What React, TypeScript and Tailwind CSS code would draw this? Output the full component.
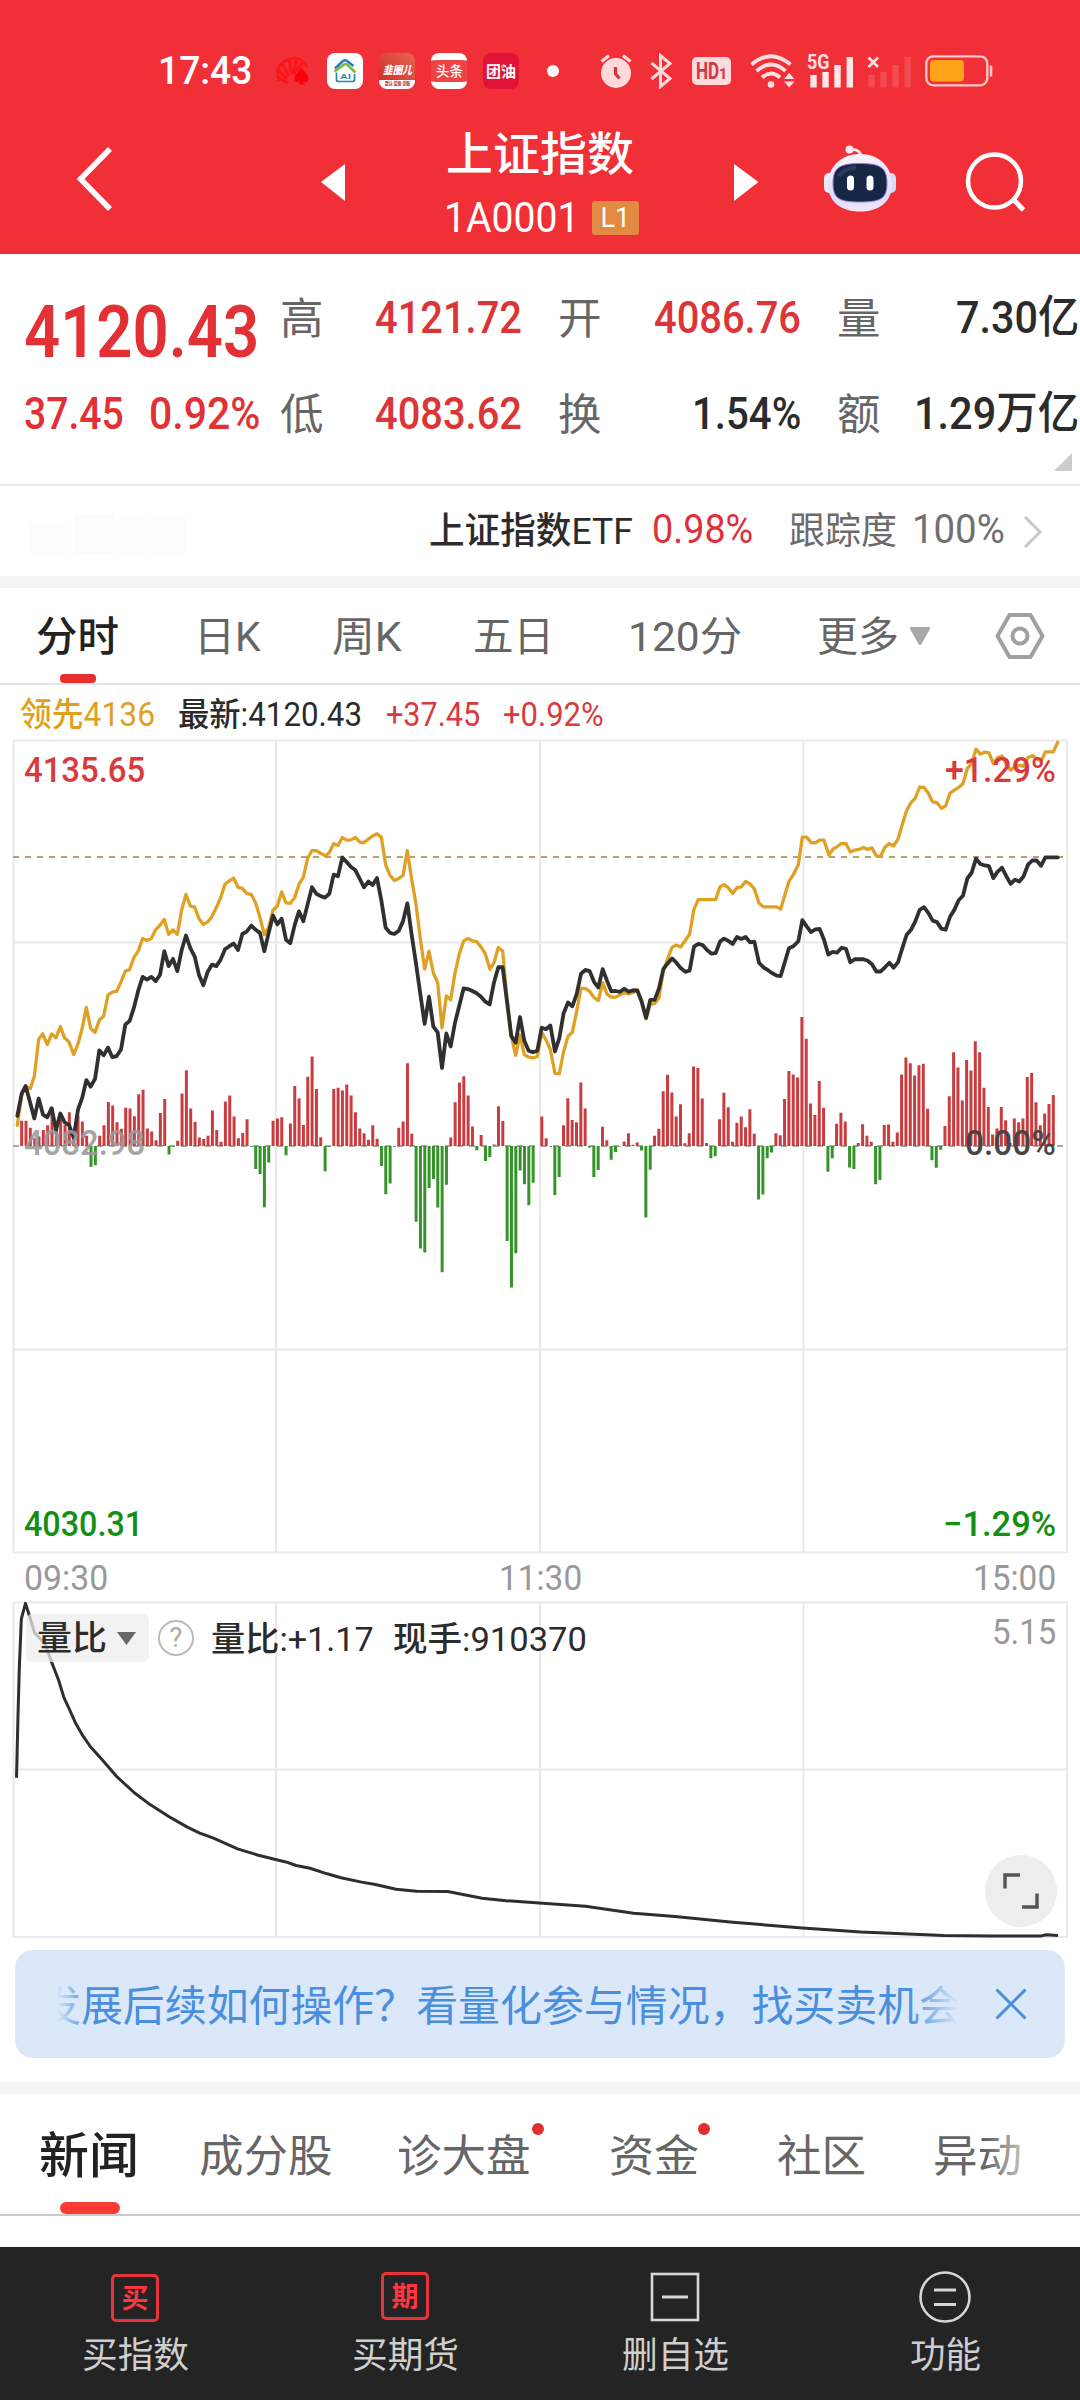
import { useLayoutEffect, useRef, useState, type ReactNode } from "react";

/* Single-line text condensed horizontally to the width of its box. */
function Fit({ className = "", children }: { className?: string; children: ReactNode }) {
  const outer = useRef<HTMLSpanElement>(null);
  const inner = useRef<HTMLSpanElement>(null);
  const [scale, setScale] = useState(1);
  useLayoutEffect(() => {
    if (outer.current && inner.current) {
      setScale(outer.current.clientWidth / inner.current.offsetWidth);
    }
  }, []);
  return (
    <span ref={outer} className={"block shrink-0 whitespace-nowrap " + className}>
      <span ref={inner} className="inline-block origin-left" style={{ transform: `scaleX(${scale})` }}>
        {children}
      </span>
    </span>
  );
}

/* Minute-by-minute momentum bars; positive is up, negative is down. */
const BARS = [
  66, 66, 48, 20, 25, 42, 54, 100, 50, 70, 55, 88, 38, 80, 64, 27, -54, -50, 27, 54, 115, 106, 62, 45, 100, 98, 78, 135,
  147, 46, 38, 15, 86, 123, -22, -2, 14, 137, 198, 98, 63, 22, 18, 27, 93, 42, 11, 116, 132, 77, 20, 34, 70, -2, -60,
  -73, -160, -43, 66, 72, 75, -24, 59, 157, 124, 55, 181, 234, 149, 23, -66, -2, 149, 152, 145, 161, 132, 88, 46, 33, 16,
  54, 19, -52, -126, -98, -2, 48, 64, 216, 32, -198, -268, -278, -110, -86, -161, -330, -101, 22, 114, 166, 182, 132, 51,
  -11, 29, -39, -29, 4, 104, 65, -248, -370, -280, -64, -100, -155, -96, 0, 77, 20, -2, -128, -81, 54, 125, 68, 62, 166,
  98, -4, -81, -63, 50, 15, -36, -16, -1, 12, 33, 3, 9, -12, -187, -62, 27, 45, 143, 186, 140, 77, 109, 7, 33, 208, 204,
  124, 8, -32, -27, 70, 139, 101, 11, 61, 77, 49, 96, 32, -140, -127, -32, -17, 33, 28, 123, 196, 187, 179, 337, 280,
  111, 81, 170, 100, -67, -32, 58, 87, 64, -56, -60, 8, 57, 27, 11, -100, -89, 55, 56, 11, 35, 187, 231, 216, 184, 211,
  215, 97, -37, -57, -10, 52, 130, 245, 205, 119, 225, 197, 274, 245, 152, 102, 30, 46, 102, 67, 8, 72, 62, 72, 180, 191,
  114, 54, 85, 110, 133,
];

const INDEX_LINE =
  "52,1008 65,950 77,930 91,975 103,1015 116,963 129,1005 142,1012 155,988 168,1045 181,1002 194,1025 207,1032 221,1065 234,992 247,960 259,915 272,932 285,912 298,837 311,850 324,830 337,855 350,852 363,835 376,770 389,760 402,725 415,680 428,645 441,652 454,645 467,656 480,640 493,578 506,617 519,598 532,630 545,575 558,537 571,570 584,592 597,640 610,667 623,632 636,613 649,617 662,600 675,573 688,565 701,558 714,575 727,533 740,527 754,511 767,522 780,530 793,578 806,530 819,485 832,508 845,493 858,548 871,557 884,510 897,474 910,500 923,455 936,411 949,428 962,434 975,438 988,428 1001,378 1014,382 1027,333 1040,345 1053,358 1066,366 1080,390 " +
  "1092,411 1105,396 1118,405 1131,387 1144,445 1157,517 1170,530 1183,533 1196,525 1209,500 1222,453 1235,535 1248,610 1261,690 1274,768 1287,697 1300,775 1313,790 1326,883 1339,793 1352,827 1365,765 1378,720 1391,675 1404,677 1417,682 1430,688 1443,697 1456,710 1469,717 1482,660 1495,620 1508,620 1521,710 1534,800 1547,817 1560,750 1573,812 1586,838 1599,842 1612,838 1625,778 1638,782 1651,772 1665,840 1678,805 1691,740 1704,712 1717,722 1730,690 1743,637 1756,627 1769,630 1782,658 1795,673 1808,625 1821,655 1834,683 1847,682 1860,684 1873,676 1886,684 1899,680 1912,681 1925,710 1938,752 1951,705 1964,705 1977,675 1990,625 2003,610 2016,597 2029,608 2042,622 2056,632 2069,628 2082,566 2095,559 2108,562 2121,575 2134,584 2147,583 2160,553 " +
  "2172,545 2185,551 2198,559 2211,541 2224,546 2237,541 2250,555 2263,553 2277,608 2290,620 2303,627 2316,635 2330,642 2342,643 2355,605 2367,570 2380,565 2395,552 2407,497 2420,513 2433,528 2446,521 2459,520 2472,548 2485,587 2498,580 2511,582 2525,569 2538,572 2551,607 2564,599 2590,599 2603,603 2616,612 2629,631 2642,631 2655,620 2668,608 2681,621 2694,607 2707,570 2720,535 2733,522 2746,500 2759,470 2772,463 2785,478 2798,498 2811,502 2824,519 2837,522 2850,488 2863,470 2876,445 2889,433 2902,388 2915,373 2928,336 2941,350 2954,354 2967,356 2980,387 2993,370 3006,360 3019,382 3032,402 3045,391 3058,396 3071,382 3084,352 3097,341 3110,341 3123,355 3136,333 3173,333";

const LEAD_LINE =
  "52,1033 65,955 77,932 91,937 103,905 116,808 128,794 142,822 155,794 168,804 181,775 194,805 207,815 221,848 234,820 247,778 259,725 272,780 285,790 298,758 311,748 324,692 337,685 350,683 363,658 376,630 389,626 402,594 415,577 428,545 441,550 454,545 467,522 480,510 493,495 506,534 519,522 532,534 545,470 558,430 571,460 584,463 597,493 610,508 623,502 636,487 649,464 662,438 675,403 688,394 701,387 714,411 727,414 740,427 754,430 767,452 780,490 793,535 806,515 819,471 832,460 845,423 858,452 871,453 884,438 897,403 910,385 923,335 936,315 949,315 962,322 977,329 988,320 1001,297 1014,302 1027,281 1040,288 1053,287 1066,281 1080,293 " +
  "1090,295 1105,285 1118,277 1131,271 1144,280 1157,352 1170,380 1183,393 1196,388 1209,380 1222,315 1235,390 1248,455 1261,545 1274,625 1287,578 1300,635 1313,660 1326,778 1339,695 1352,705 1365,635 1378,585 1391,551 1404,545 1417,551 1430,553 1443,567 1456,585 1470,625 1482,608 1495,568 1508,578 1521,700 1534,800 1547,850 1560,797 1573,848 1586,855 1599,857 1612,853 1625,790 1638,810 1651,835 1665,897 1678,898 1691,840 1704,800 1717,790 1730,735 1743,675 1756,675 1769,683 1782,699 1795,707 1808,660 1821,690 1834,698 1847,698 1860,692 1873,686 1886,690 1899,686 1912,678 1925,708 1938,755 1951,717 1964,715 1977,700 1990,630 2003,598 2016,568 2029,562 2042,567 2056,550 2069,533 2082,468 2095,443 2147,443 2160,410 " +
  "2172,404 2185,412 2198,427 2211,412 2224,410 2237,396 2250,402 2263,415 2277,452 2290,462 2330,462 2342,468 2355,430 2367,395 2380,378 2395,352 2407,280 2420,280 2433,294 2446,295 2459,288 2472,288 2487,327 2498,312 2511,305 2525,296 2538,297 2551,319 2564,314 2577,312 2590,307 2603,312 2616,308 2629,329 2642,330 2655,306 2668,297 2681,303 2694,285 2707,247 2720,210 2733,190 2746,178 2759,149 2772,150 2785,165 2798,188 2811,190 2825,205 2837,198 2850,165 2863,157 2876,150 2889,140 2902,100 2915,88 2928,50 2941,63 2954,58 2967,60 2980,88 2993,72 3006,68 3019,90 3032,105 3045,95 3058,92 3071,95 3084,72 3097,67 3110,75 3123,82 3136,57 3160,57 3173,32";

const RATIO_LINE =
  "24,1107 26,960 28,830 31,705 37,666 44,705 50,740 58,755 66,770 75,815 85,860 93,905 101,935 110,970 120,1000 131,1028 150,1065 170,1105 195,1145 218,1175 245,1205 272,1232 290,1247 310,1260 345,1287 375,1303 415,1320 430,1329 450,1336 475,1350 495,1360 525,1371 545,1377 575,1389 605,1394 650,1395 700,1412 735,1418 783,1424 850,1432 920,1450 980,1458 1060,1472 1165,1487 1250,1497 1370,1506 1440,1507 1512,1507 1519,1504 1536,1506";

function barPath(sign: number) {
  return BARS.map((v, i) => (v * sign > 0 ? `M${52 + 13.004 * (i + 1)} 1087v${-v}` : "")).join("");
}

function StatusBar() {
  return (
    <div className="flex h-[60px] items-center text-white">
      <Fit className="ml-[158px] w-[94px] text-[38px] leading-[60px] font-medium">17:43</Fit>
      <svg className="ml-[24px]" width="33" height="30" viewBox="0 0 33 30">
        <g fill="none" stroke="#fc1518" strokeWidth="3.200">
          <path d="M12 27 2 21M11 23 2 14M13 20 6 8M16 18 13 4M18 19 20 4M20 15 26 7" />
          <path d="M3 25Q-1 15 5 8Q16-2 27 5L31 11" strokeWidth="2.500" />
        </g>
        <path d="M25.500 12c3 4 7 7 7 10.500 0 4-4 5-6 2l2 4h-6l2-4c-2 3-6 2-6-2C18.500 19 22.500 16 25.500 12z" fill="#fb0006" />
      </svg>
      <svg className="ml-[18px]" width="36" height="36" viewBox="0 0 36 36">
        <rect width="36" height="36" rx="8" fill="#fff" />
        <path d="M8 15.500 16 8q2-1.500 4 0l6.500 5" fill="none" stroke="#2b7fc0" strokeWidth="2.600" />
        <path d="M7.500 18.500 17 11.500q1.500-1 3 0l8.500 8" fill="none" stroke="#7fb93c" strokeWidth="2.600" />
        <path d="M9.500 19.500v7q0 2 2 2h14q2 0 2-2v-5.500" fill="none" stroke="#2488a8" strokeWidth="1.700" />
        <text x="18.500" y="25.500" textAnchor="middle" fontSize="8" fontWeight="700" fill="#2b8fb0" textLength="11" lengthAdjust="spacingAndGlyphs">AI</text>
      </svg>
      <div className="ml-4 flex h-9 w-9 flex-col items-center overflow-hidden rounded-[8px] bg-gradient-to-bl from-[#ea6452] to-[#c9251f]">
        <Fit className="h-[27px] w-[29px] text-[11px] leading-[36px] font-black italic">韭圈儿</Fit>
        <div className="flex h-[9px] w-full justify-center bg-white">
          <Fit className="w-[25px] text-[5px] leading-[7px] font-black text-[#c43a34]">默认·定投·诊断</Fit>
        </div>
      </div>
      <div className="ml-4 flex h-9 w-9 justify-center overflow-hidden rounded-[8px] border-y-[7px] border-white bg-[#ee4444]">
        <Fit className="w-[27px] text-[14px] leading-[23px] font-medium">头条</Fit>
      </div>
      <div className="relative ml-4 flex h-9 w-9 justify-center rounded-[8px] bg-[#e01236]">
        <Fit className="w-[30px] text-[15px] leading-[38px] font-bold">团油</Fit>
        <span className="absolute top-[12px] left-[18px] h-[3px] w-[3px] rounded-full bg-[#ffb21c]" />
      </div>
      <span className="ml-7 h-3 w-3 rounded-full bg-white" />
      <svg className="ml-[41px]" width="32" height="36" viewBox="0 0 32 36">
        <circle cx="16" cy="20" r="15" fill="#ffd9db" />
        <path d="M1.500 8.500 9 2.500M30.500 8.500 23 2.500" stroke="#ffd9db" strokeWidth="3.200" />
        <path d="M15.500 14v7l4 4.500" fill="none" stroke="#d8323a" strokeWidth="3.200" />
      </svg>
      <svg className="ml-[18px]" width="22" height="36" viewBox="0 0 22 36">
        <path d="M1.500 10 20 25.500 10.500 33.500V2.500L20 10.500 1.500 26" fill="none" stroke="#ffd9db" strokeWidth="3" />
      </svg>
      <div className="ml-[20px] flex h-7 w-[39px] items-center justify-center rounded-[5px] bg-[#ffd9db] text-[#cf3a42]">
        <Fit className="w-[23px] text-[23px] leading-[29px] font-bold">HD</Fit>
        <span className="pt-[7px] text-[15px] leading-none font-bold">1</span>
      </div>
      <svg className="ml-[19px]" width="46" height="36" viewBox="0 0 46 36">
        <g fill="none" stroke="#ffdfe0" strokeWidth="3.800">
          <path d="M1.500 11.500Q21-5 40.500 11.500M6.500 18Q21 5 35.500 18M12 24.500q9-8 18 0" />
        </g>
        <circle cx="21" cy="31.500" r="3.300" fill="#ffdfe0" />
        <path d="M34 26h10.500L39.200 20zM34 28.500h10.500L39.200 34.500z" fill="#ffdfe0" />
      </svg>
      <svg className="ml-[11px] overflow-visible" width="48" height="36" viewBox="0 0 48 36">
        <text x="0" y="16" fontSize="20" fontWeight="700" fill="#ffdfe0" textLength="22.500" lengthAdjust="spacingAndGlyphs">5G</text>
        <path d="M6.500 22v12.500M18.500 19v15.500M30.500 12v22.500M42.800 4v30.500" stroke="#ffe6e7" strokeWidth="6.400" />
      </svg>
      <svg className="ml-[12px]" width="46" height="36" viewBox="0 0 46 36">
        <path d="M1.500 4.500l9.500 9.500M11 4.500 1.500 14" stroke="#ffdfe0" strokeWidth="2.800" />
        <path d="M4.500 22v12.500M16.500 19v15.500M28.500 12v22.500M40.800 4v30.500" stroke="#f64a52" strokeWidth="6.400" />
      </svg>
      <svg className="ml-[12px]" width="68" height="32" viewBox="0 0 68 32">
        <rect x="1.300" y="1.300" width="61" height="29" rx="7" fill="none" stroke="#ffc9cb" strokeWidth="2.300" />
        <rect x="5" y="5" width="34" height="21.500" rx="4" fill="#ffa318" />
        <path d="M66 10.500v11" stroke="#ffc9cb" strokeWidth="2.600" />
      </svg>
    </div>
  );
}

function Robot() {
  return (
    <svg width="72" height="68" viewBox="0 0 72 68">
      <defs>
        <linearGradient id="shell" x1="0" y1="0" x2="0" y2="1">
          <stop offset="0" stopColor="#fbf3fb" />
          <stop offset=".75" stopColor="#dcdcfa" />
          <stop offset="1" stopColor="#f6e6f4" />
        </linearGradient>
      </defs>
      <rect x="0" y="28" width="12" height="20" rx="5" fill="#ecebfb" />
      <rect x="60" y="28" width="12" height="20" rx="5" fill="#d6dafa" />
      <path d="M37 13Q37 4 27 4.500" fill="none" stroke="#f6e4ee" strokeWidth="2.800" />
      <circle cx="25.500" cy="4.500" r="4" fill="#ffe9ef" />
      <path d="M36 9C55 9 68 22 68 39S56 66.500 36 66.500 4 56 4 39 17 9 36 9z" fill="url(#shell)" />
      <path d="M36 18.500c20 0 27 4 27 19.500S57 57 36 57 9 53.500 9 38s7-19.500 27-19.500z" fill="#182646" stroke="#8b80dd" strokeWidth="1" />
      <path d="M15 31q5-8 17-8.500" fill="none" stroke="#3c4a70" strokeWidth="4" opacity=".6" />
      <rect x="23" y="30.500" width="7" height="15" rx="3.500" fill="#fff" />
      <rect x="42.500" y="30.500" width="7" height="15" rx="3.500" fill="#fff" />
    </svg>
  );
}

function Header() {
  return (
    <header className="flex h-[254px] flex-col bg-[#f12f37] pt-[41px] text-white">
      <StatusBar />
      <div className="flex">
        <svg className="mt-[44px] ml-[74px]" width="42" height="68" viewBox="0 0 42 68">
          <path d="M36 4 6.500 34 36 64" fill="none" stroke="#fff" strokeWidth="5.500" />
        </svg>
        <svg className="mt-[62px] ml-[205px]" width="25" height="38" viewBox="0 0 25 38">
          <path d="M24 1v37L0 19z" fill="#fff" />
        </svg>
        <div className="ml-[98px] flex w-[200px] flex-col">
          <Fit className="mt-[21px] ml-[2px] w-[188px] text-[46px] leading-[64px] font-medium">上证指数</Fit>
          <div className="flex items-center">
            <Fit className="w-[135px] text-[42px] leading-[64px] font-[450]">1A0001</Fit>
            <div className="ml-[13px] flex h-[34px] w-[47px] items-center justify-center rounded-[3px] bg-[#e38a42]">
              <Fit className="w-[30px] text-[27px] leading-[34px]">L1</Fit>
            </div>
          </div>
        </div>
        <svg className="mt-[62px] ml-[90px]" width="25" height="38" viewBox="0 0 25 38">
          <path d="M0 1v37L24.500 19z" fill="#fff" />
        </svg>
        <div className="mt-[44px] ml-[65px]">
          <Robot />
        </div>
        <svg className="mt-[49px] ml-[69px]" width="64" height="64" viewBox="0 0 64 64">
          <circle cx="29.500" cy="31" r="26.500" fill="none" stroke="#fff" strokeWidth="4.500" />
          <path d="M48 49 58.500 60" stroke="#fff" strokeWidth="5" />
        </svg>
      </div>
    </header>
  );
}

const QUOTES = [
  { label: "高", value: "4121.72", box: "w-[147px] mr-[36px] text-[#dc3538]" },
  { label: "开", value: "4086.76", box: "w-[147px] mr-[36px] text-[#dc3538]" },
  { label: "量", value: "7.30亿", box: "w-[123px] mr-[1px] text-[#2b2b2b]" },
  { label: "低", value: "4083.62", box: "w-[147px] mr-[36px] text-[#dc3538]" },
  { label: "换", value: "1.54%", box: "w-[109px] mr-[36px] text-[#2b2b2b]" },
  { label: "额", value: "1.29万亿", box: "w-[165px] mr-[1px] text-[#2b2b2b]" },
];

function Quotes() {
  return (
    <section className="relative flex h-[232px] border-b-2 border-[#eaeaea]">
      <div className="w-[280px] pt-[39px] pl-[24px] text-[#e23034]">
        <Fit className="w-[235px] text-[72.500px] leading-[80px] font-semibold">4120.43</Fit>
        <div className="mt-[11px] flex text-[45px] leading-[60px] font-medium">
          <Fit className="w-[100px]">37.45</Fit>
          <Fit className="ml-[25px] w-[111px]">0.92%</Fit>
        </div>
      </div>
      <div className="grid h-[187px] w-[800px] grid-cols-[44px_234px_44px_235px_44px_199px] gap-y-[33px] pt-[34px]">
        {QUOTES.map((q) => (
          <div key={q.label} className="contents">
            <span className="text-[43.500px] leading-[63px] text-[#666]">{q.label}</span>
            <Fit className={"justify-self-end text-[45px] leading-[60px] font-medium " + q.box}>{q.value}</Fit>
          </div>
        ))}
      </div>
      <svg className="absolute right-2 bottom-[13px]" width="18" height="18" viewBox="0 0 18 18">
        <path d="M18 0v18H0z" fill="#ccc" />
      </svg>
    </section>
  );
}

function EtfRow() {
  return (
    <section className="flex h-[90px] items-center pt-[2px] leading-[60px]">
      <div className="ml-[30px] flex h-[44px] w-[170px] items-end gap-1 opacity-30">
        <span className="h-8 w-10 bg-[#fafafa]" />
        <span className="h-10 w-10 bg-[#f8f8f8]" />
        <span className="h-9 w-7 bg-[#fbfbfb]" />
        <span className="h-10 w-9 bg-[#fafafa]" />
      </div>
      <Fit className="ml-[229px] w-[204px] text-[37px] font-medium text-[#2b2b2b]">
        上证指数<span className="font-[450]">ETF</span>
      </Fit>
      <Fit className="ml-[19px] w-[101px] pb-1 text-[40px] font-[450] text-[#e0303c]">0.98%</Fit>
      <Fit className="ml-[36px] w-[108px] text-[37px] text-[#6b6b6b]">跟踪度</Fit>
      <Fit className="ml-[15px] w-[93px] pb-1 text-[40px] text-[#707070]">100%</Fit>
      <svg className="ml-[17px]" width="24" height="36" viewBox="0 0 24 36">
        <path d="M3 3 18 18 3 33" fill="none" stroke="#c8c8c8" strokeWidth="3" />
      </svg>
    </section>
  );
}

function PeriodTabs() {
  return (
    <nav className="relative flex h-[97px] border-b-2 border-[#e6e6e6] text-[41px] leading-[99px] text-[#666]">
      <Fit className="ml-[36px] w-[83px] font-medium text-[#222]">分时</Fit>
      <Fit className="ml-[75px] w-[67px]">日K</Fit>
      <Fit className="ml-[71px] w-[70px]">周K</Fit>
      <Fit className="ml-[71px] w-[81px]">五日</Fit>
      <Fit className="ml-[74px] w-[114px]">120分</Fit>
      <Fit className="ml-[75px] w-[82px]">更多</Fit>
      <svg className="mt-[39px] ml-[10px]" width="22" height="19" viewBox="0 0 22 19">
        <path d="M2 0h18q2 0 1 2L12.500 17q-1.500 2-3 0L1 2Q0 0 2 0z" fill="#a9a9a9" />
      </svg>
      <svg className="mt-[24px] ml-[64px]" width="50" height="48" viewBox="0 0 50 48">
        <path d="M14.500 3h21L47.500 24l-12 21h-21L2.500 24z" fill="none" stroke="#a0a0a0" strokeWidth="4" strokeLinejoin="round" />
        <circle cx="25" cy="24" r="7.500" fill="none" stroke="#a0a0a0" strokeWidth="4" />
      </svg>
      <span className="absolute bottom-0 left-[60px] h-[9px] w-[36px] rounded-[4px] bg-[#e5302f]" />
    </nav>
  );
}

function PriceChart() {
  return (
    <section>
      <div className="flex h-[55px] pt-[4px] text-[32.500px] leading-[52px] font-[450] text-[#2b2b2b]">
        <Fit className="ml-[20px] w-[135px] text-[#dfa01e]">领先4136</Fit>
        <Fit className="ml-[23px] w-[184px]">最新:4120.43</Fit>
        <Fit className="ml-[24px] w-[94px] text-[#d93a3d]">+37.45</Fit>
        <Fit className="ml-[23px] w-[101px] text-[#d93a3d]">+0.92%</Fit>
      </div>
      <div className="relative h-[813px]">
        <svg className="absolute -top-[10px] left-0" width="1080" height="824" viewBox="0 0 1080 824">
          <path d="M13 10.500H1067M13 212.500H1067M13 619.500H1067M13 822.500H1067M13.500 10V823M276 10V823M540 10V823M803.500 10V823M1067 10V823" stroke="#e9e9e9" strokeWidth="2" fill="none" />
          <path d="M13 127H1067" stroke="#b5a374" strokeWidth="2" strokeDasharray="6 6" />
          <path d="M13 416H1067" stroke="#b0a6a6" strokeWidth="2" strokeDasharray="6 6" />
          <g transform="scale(.33333 .3827)" fill="none" strokeLinejoin="round" strokeLinecap="round">
            <g strokeLinecap="butt" strokeWidth="9">
              <path d={barPath(1)} stroke="#c93c40" />
              <path d={barPath(-1)} stroke="#36932a" />
            </g>
            <polyline points={LEAD_LINE} stroke="#dfa024" strokeWidth="3.300" vectorEffect="non-scaling-stroke" />
            <polyline points={INDEX_LINE} stroke="#303030" strokeWidth="3.800" vectorEffect="non-scaling-stroke" />
          </g>
        </svg>
        <div className="relative flex h-full flex-col px-[24px] pt-[10px] text-[34.500px] leading-[40px] font-medium">
          <div className="flex justify-between text-[#d93a3d]">
            <Fit className="w-[121px]">4135.65</Fit>
            <Fit className="w-[111px]">+1.29%</Fit>
          </div>
          <div className="mt-[333px] flex justify-between">
            <Fit className="w-[121px] text-[#999]/90">4082.98</Fit>
            <Fit className="w-[91px] text-[#4a4444]">0.00%</Fit>
          </div>
          <div className="mt-[341px] flex justify-between text-[#138f13]">
            <Fit className="w-[119px]">4030.31</Fit>
            <Fit className="w-[113px]">−1.29%</Fit>
          </div>
        </div>
      </div>
      <div className="flex h-[49px] justify-between px-[24px] text-[35px] leading-[52px] font-[450] text-[#999]">
        <Fit className="w-[84px]">09:30</Fit>
        <Fit className="w-[83px]">11:30</Fit>
        <Fit className="w-[83px]">15:00</Fit>
      </div>
    </section>
  );
}

function RatioChart() {
  return (
    <section className="relative h-[336px]">
      <svg className="absolute -top-[2px] left-0" width="1080" height="340" viewBox="0 0 1080 340">
        <path d="M13 2.500H1067M13 169.500H1067M13 337H1067M13.500 2V338M276 2V338M540 2V338M803.500 2V338M1067 2V338" stroke="#e9e9e9" strokeWidth="2" fill="none" />
        <g transform="translate(0 -260) scale(.68878 .39541)">
          <polyline points={RATIO_LINE} fill="none" stroke="#2e2e2e" strokeWidth="3" strokeLinejoin="round" vectorEffect="non-scaling-stroke" />
        </g>
      </svg>
      <div className="relative flex pt-[12px] text-[34px] leading-[50px] font-[450] text-[#2b2b2b]">
        <div className="ml-[26px] flex h-[48px] w-[123px] items-center rounded-[6px] bg-[#ededed]/75">
          <Fit className="ml-[11px] w-[70px]">量比</Fit>
          <svg className="ml-[10px]" width="19" height="13" viewBox="0 0 19 13">
            <path d="M0 0h19L9.500 13z" fill="#666" />
          </svg>
        </div>
        <div className="mt-[6px] ml-[9px] h-[36px] w-[36px] rounded-full border-[2.500px] border-[#bbb] text-center text-[27px] leading-[32px] font-normal text-[#aaa]">?</div>
        <Fit className="ml-[17px] w-[163px]">量比:+1.17</Fit>
        <Fit className="ml-[19px] w-[194px]">现手:910370</Fit>
        <Fit className="-mt-[6px] ml-[405px] w-[64px] text-[35px] text-[#999]">5.15</Fit>
      </div>
      <div className="absolute right-[23px] bottom-[11px] flex h-[72px] w-[72px] items-center justify-center rounded-full bg-[#ededed]">
        <svg width="36" height="36" viewBox="0 0 36 36">
          <path d="M2 15.500V2h15M34 20.500V34H19" fill="none" stroke="#555" strokeWidth="3.400" />
        </svg>
      </div>
    </section>
  );
}

function Banner() {
  return (
    <section className="mx-[15px] mt-[12px] flex h-[108px] items-center overflow-hidden rounded-[18px] bg-[#dae8fa]">
      <div className="relative ml-[42px] flex h-full w-[902px] shrink-0 overflow-hidden">
        <Fit className="-ml-[18px] w-[922px] text-[42px] leading-[114px] text-[#4a8ede]">发展后续如何操作？看量化参与情况，找买卖机会</Fit>
        <span className="absolute inset-y-0 left-0 w-[30px] bg-gradient-to-r from-[#dae8fa] to-[#dae8fa]/0" />
        <span className="absolute inset-y-0 right-0 w-[50px] bg-gradient-to-l from-[#dae8fa] to-[#dae8fa]/0" />
      </div>
      <svg className="ml-[35px] shrink-0" width="34" height="34" viewBox="0 0 34 34">
        <path d="M2.500 2.500l29 29M31.500 2.500l-29 29" stroke="#4a8ede" strokeWidth="3" />
      </svg>
    </section>
  );
}

function NewsTabs() {
  return (
    <nav className="relative flex h-[122px] border-b-2 border-[#cacaca] text-[44.500px] leading-[126px] text-[#666]">
      <Fit className="ml-[39px] w-[100px] text-[49px] font-medium text-[#222]">新闻</Fit>
      <Fit className="ml-[60px] w-[134px]">成分股</Fit>
      <div className="relative ml-[64px]">
        <Fit className="w-[134px]">诊大盘</Fit>
        <span className="absolute top-[29px] -right-[13px] h-3 w-3 rounded-full bg-[#e02f2f]" />
      </div>
      <div className="relative ml-[78px]">
        <Fit className="w-[90px]">资金</Fit>
        <span className="absolute top-[29px] -right-[11px] h-3 w-3 rounded-full bg-[#e02f2f]" />
      </div>
      <Fit className="ml-[78px] w-[89px]">社区</Fit>
      <div className="relative ml-[67px]">
        <Fit className="w-[89px]">异动</Fit>
        <span className="absolute inset-y-0 -right-[24px] w-[60px] bg-gradient-to-l from-white to-white/0" />
      </div>
      <span className="absolute bottom-0 left-[60px] h-[12px] w-[60px] rounded-[6px] bg-[#fb3a33]" />
    </nav>
  );
}

function BottomBar() {
  const label = "text-[36px] leading-[42px]";
  return (
    <footer className="mt-[31px] grid h-[153px] grid-cols-4 bg-[#242424] pt-[24px] text-[#cfcfcf]">
      <div className="flex flex-col items-center">
        <div className="mt-[3px] h-[48px] w-[48px] rounded-[5px] border-[3px] border-[#e8343b] text-center text-[27px] leading-[44px] font-bold text-[#ff3540]">买</div>
        <Fit className={"mt-[13px] w-[107px] " + label}>买指数</Fit>
      </div>
      <div className="flex flex-col items-center">
        <div className="mt-[1px] h-[48px] w-[48px] rounded-[5px] border-[3px] border-[#e8343b] text-center text-[27px] leading-[44px] font-bold text-[#ff3540]">期</div>
        <Fit className={"mt-[15px] w-[107px] " + label}>买期货</Fit>
      </div>
      <div className="flex flex-col items-center">
        <svg className="mt-[1px]" width="50" height="50" viewBox="0 0 50 50">
          <rect x="2" y="2" width="46" height="46" fill="none" stroke="#d6d6d6" strokeWidth="2.600" />
          <path d="M12 25h26" stroke="#d6d6d6" strokeWidth="3" />
        </svg>
        <Fit className={"mt-[13px] w-[107px] " + label}>删自选</Fit>
      </div>
      <div className="flex flex-col items-center">
        <svg width="52" height="52" viewBox="0 0 52 52">
          <circle cx="26" cy="26" r="24.500" fill="none" stroke="#d6d6d6" strokeWidth="2.600" />
          <path d="M15 19h22M15 33.500h22" stroke="#d6d6d6" strokeWidth="3" />
        </svg>
        <Fit className={"mt-[12px] w-[71px] " + label}>功能</Fit>
      </div>
    </footer>
  );
}

export default function App() {
  return (
    <main lang="zh-CN" className="h-[2400px] w-[1080px] overflow-hidden bg-white font-[Roboto,'Noto_Sans_CJK_SC',sans-serif]">
      <Header />
      <Quotes />
      <EtfRow />
      <div className="h-[12px] bg-[#f3f3f3]" />
      <PeriodTabs />
      <PriceChart />
      <RatioChart />
      <Banner />
      <div className="mt-[24px] h-[12px] bg-[#f4f4f4]" />
      <NewsTabs />
      <BottomBar />
    </main>
  );
}
